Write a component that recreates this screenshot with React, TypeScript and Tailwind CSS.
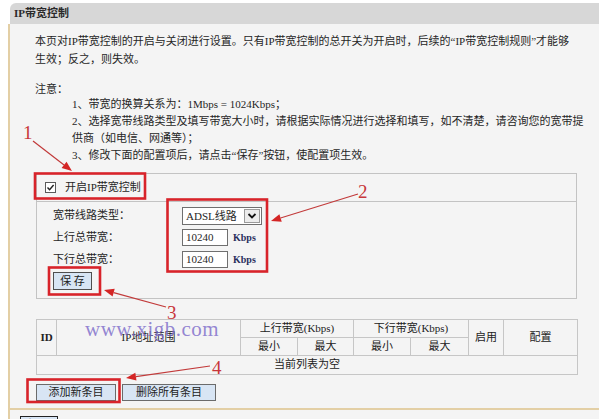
import React from 'react'

// Router page: "IP带宽控制" with red tutorial markings drawn on top.

const font = "font-['Liberation_Serif','Noto_Sans_CJK_SC',serif]"

function Arrow({ x1, y1, x2, y2 }: { x1: number; y1: number; x2: number; y2: number }) {
  const a = Math.atan2(y2 - y1, x2 - x1)
  const len = 10
  const w = 4
  const bx = x2 - len * Math.cos(a)
  const by = y2 - len * Math.sin(a)
  const px = -Math.sin(a) * w
  const py = Math.cos(a) * w
  return (
    <g>
      <line x1={x1} y1={y1} x2={bx} y2={by} stroke="#c23a3a" strokeWidth={1.2} />
      <polygon points={`${x2},${y2} ${bx + px},${by + py} ${bx - px},${by - py}`} fill="#d42525" />
    </g>
  )
}

function Marks() {
  return (
    <svg className="absolute inset-0 pointer-events-none" width={599} height={419} viewBox="0 0 599 419">
      <g fill="none" stroke="#d8232a" strokeWidth={2.6}>
        <rect x={35} y={173.5} width={110} height={25} />
        <rect x={167.5} y={199.5} width={99.5} height={72} />
        <rect x={49} y={267.5} width={51} height={27} />
        <rect x={27.5} y={379.5} width={92} height={22.5} />
      </g>
      <Arrow x1={33} y1={141} x2={72} y2={171} />
      <Arrow x1={358} y1={194} x2={271} y2={221} />
      <Arrow x1={166} y1={307} x2={104} y2={290} />
      <Arrow x1={210} y1={366} x2={126} y2={378} />
      <g fill="#c8363a" fontFamily="Liberation Serif, serif" fontSize={19}>
        <text x={23} y={139}>1</text>
        <text x={358} y={198}>2</text>
        <text x={167} y={319}>3</text>
        <text x={212} y={374}>4</text>
      </g>
    </svg>
  )
}

function Btn({ children, w }: { children: React.ReactNode; w: string }) {
  return (
    <button
      type="button"
      className={`${w} h-[17px] border border-[#6b6b6b] bg-[#d8e5f4] text-[11px] leading-[15px] text-[#222] ${font}`}
    >
      {children}
    </button>
  )
}

export default function App() {
  return (
    <div className={`relative w-[599px] h-[419px] overflow-hidden bg-white text-[11px] text-[#262626] ${font}`}>
      {/* title bar */}
      <div className="ml-[10px] mt-[3px] h-[21px] rounded-tl-[6px] bg-[#d7d7d7] pl-[4px] font-bold leading-[21px] text-[#2a2a2a]">
        IP带宽控制
      </div>

      {/* body */}
      <div className="ml-[8px] h-[386px] border-l-2 border-b-2 border-[#e3cfa5] bg-[#f4f4f4] pl-[25px] pt-[8px]">
        <p className="leading-[18px] whitespace-nowrap">
          本页对IP带宽控制的开启与关闭进行设置。只有IP带宽控制的总开关为开启时，后续的“IP带宽控制规则”才能够
        </p>
        <p className="leading-[18px]">生效；反之，则失效。</p>
        <p className="mt-[14px] h-[14px] leading-[14px]">注意：</p>
        <div className="ml-[37px] leading-[17px] whitespace-nowrap">
          <p>1、带宽的换算关系为：1Mbps = 1024Kbps；</p>
          <p>2、选择宽带线路类型及填写带宽大小时，请根据实际情况进行选择和填写，如不清楚，请咨询您的宽带提</p>
          <p>供商（如电信、网通等）；</p>
          <p>3、修改下面的配置项后，请点击“保存”按钮，使配置项生效。</p>
        </div>

        {/* settings box */}
        <div className="mt-[9px] ml-[1px] w-[541px] h-[126px] border border-[#c3c3c3]">
          <div className="h-[28px] pt-[7px] pl-[8px] border-b border-[#c3c3c3]">
            <label className="flex items-center gap-[9px] h-[12px]">
              <span className="flex items-center justify-center w-[11px] h-[11px] border border-[#5a5a5a] bg-white">
                <svg width="9" height="9" viewBox="0 0 9 9">
                  <path d="M1.5 4.5 L3.6 6.8 L7.6 2" fill="none" stroke="#222" strokeWidth="1.4" />
                </svg>
              </span>
              <span>开启IP带宽控制</span>
            </label>
          </div>
          <div className="pt-[3px] pl-[16px] flex flex-col gap-[1px]">
            <div className="flex items-center h-[21px]">
              <span className="w-[129px]">宽带线路类型：</span>
              <div className="flex items-center w-[80px] h-[18px] border border-[#6f6f6f] bg-white">
                <span className="flex-1 pl-[3px] leading-[16px]">ADSL线路</span>
                <span className="flex items-center justify-center w-[16px] h-[14px] mr-[1px] border border-[#9a9a9a] bg-[#ececec]">
                  <svg width="10" height="8" viewBox="0 0 10 8">
                    <path d="M1.5 2 L5 5.5 L8.5 2" fill="none" stroke="#111" strokeWidth="1.8" />
                  </svg>
                </span>
              </div>
            </div>
            {['上行总带宽：', '下行总带宽：'].map((l) => (
              <div key={l} className="flex items-center h-[21px]">
                <span className="w-[129px]">{l}</span>
                <span className="w-[46px] h-[17px] border border-[#6f6f6f] bg-white pl-[3px] leading-[15px]">10240</span>
                <span className="ml-[5px] font-bold text-[10px] text-[#2a2f5c]">Kbps</span>
              </div>
            ))}
            <div className="mt-[1px]">
              <button
                type="button"
                className={`w-[39px] h-[18px] border border-[#4f4f4f] bg-[#d8e5f4] text-[11px] leading-[16px] text-[#222] ${font}`}
              >
                保 存
              </button>
            </div>
          </div>
        </div>

        {/* rules table */}
        <div className="relative mt-[20px] ml-[1px] w-[541px]">
          <table className="w-[541px] table-fixed border-collapse text-center text-[#222]">
            <colgroup>
              <col className="w-[20px]" />
              <col className="w-[184px]" />
              <col className="w-[57px]" />
              <col className="w-[56px]" />
              <col className="w-[57px]" />
              <col className="w-[58px]" />
              <col className="w-[35px]" />
              <col className="w-[74px]" />
            </colgroup>
            <tbody>
              <tr className="h-[18px]">
                <td rowSpan={2} className="border border-[#c6c6c6] font-bold">ID</td>
                <td rowSpan={2} className="border border-[#c6c6c6]">IP地址范围</td>
                <td colSpan={2} className="border border-[#c6c6c6]">上行带宽(Kbps)</td>
                <td colSpan={2} className="border border-[#c6c6c6]">下行带宽(Kbps)</td>
                <td rowSpan={2} className="border border-[#c6c6c6]">启用</td>
                <td rowSpan={2} className="border border-[#c6c6c6]">配置</td>
              </tr>
              <tr className="h-[17px]">
                <td className="border border-[#c6c6c6]">最小</td>
                <td className="border border-[#c6c6c6]">最大</td>
                <td className="border border-[#c6c6c6]">最小</td>
                <td className="border border-[#c6c6c6]">最大</td>
              </tr>
              <tr className="h-[19px]">
                <td colSpan={8} className="border border-[#c6c6c6]">当前列表为空</td>
              </tr>
            </tbody>
          </table>
          {/* watermark over the table */}
          <span className="absolute left-[49px] top-[-2px] font-['Liberation_Serif',serif] text-[21px] leading-[24px] tracking-[0.5px] text-[#7a68c9]/80">
            www.xigb.com
          </span>
        </div>

        <div className="mt-[9px] ml-[1px] flex gap-[6px]">
          <Btn w="w-[80px]">添加新条目</Btn>
          <Btn w="w-[94px]">删除所有条目</Btn>
        </div>
      </div>

      {/* help section */}
      <div className="ml-[8px] h-[20px] border-l-2 border-[#e3cfa5] bg-[#f4f4f4] pl-[10px] pt-[6px]">
        <button
          type="button"
          className={`w-[38px] h-[18px] border border-[#222] bg-[#d8e5f4] font-bold text-[11px] leading-[16px] ${font}`}
        >
          帮 助
        </button>
      </div>

      <Marks />
    </div>
  )
}
